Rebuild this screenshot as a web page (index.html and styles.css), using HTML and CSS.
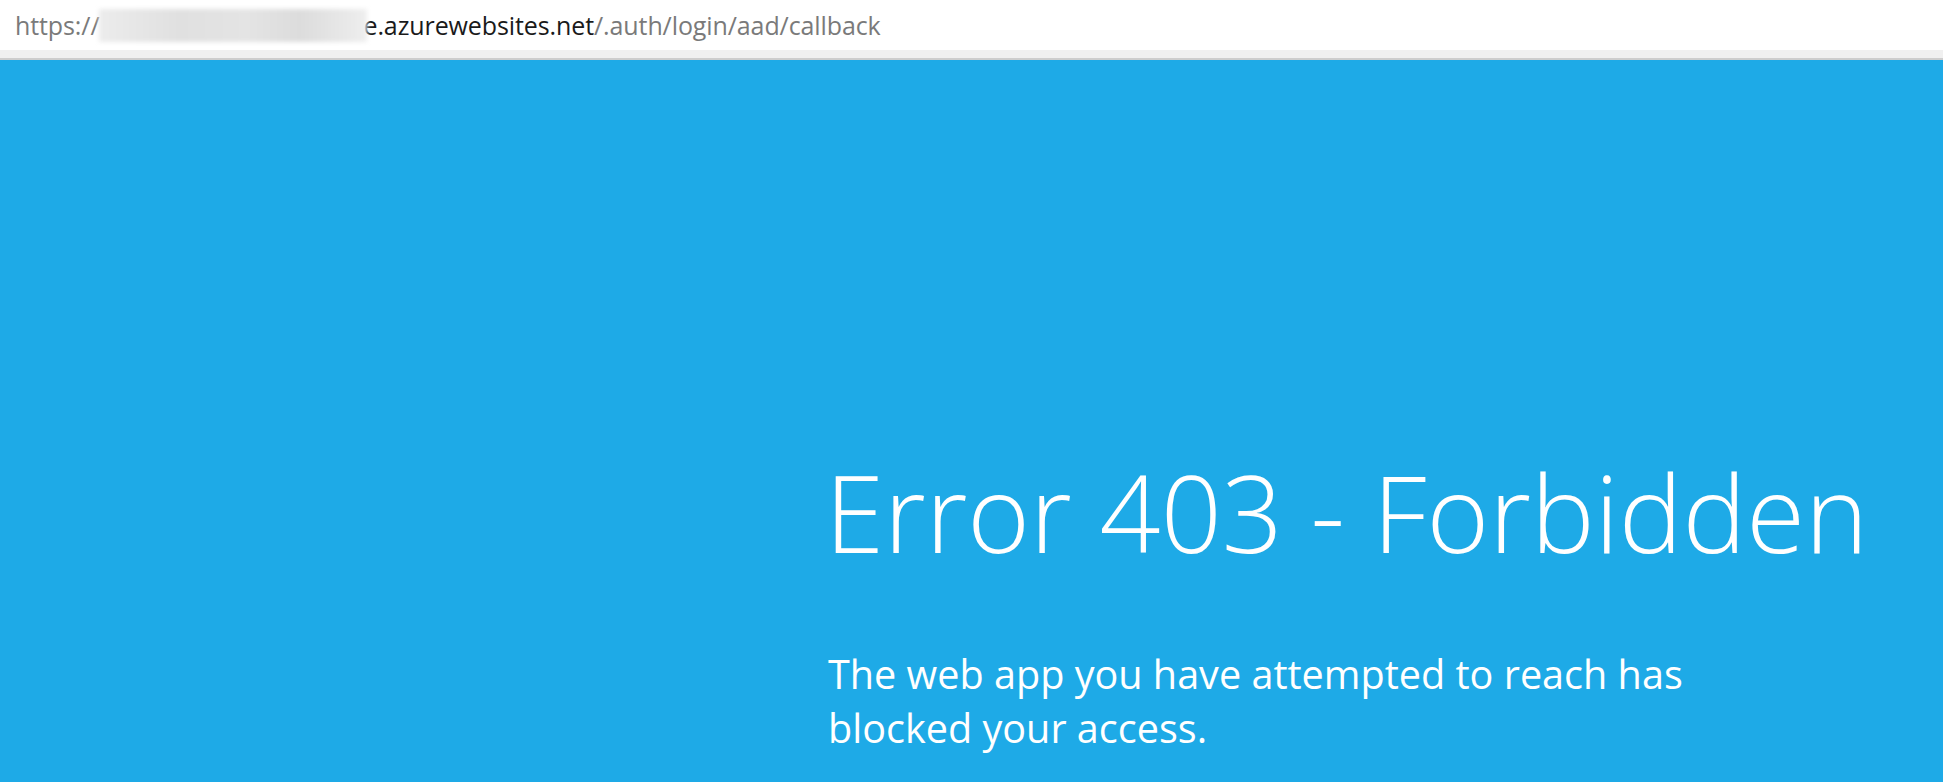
FILE: index.html
```html
<!DOCTYPE html>
<html lang="en">
<head>
<meta charset="utf-8">
<title>Error 403 - Forbidden</title>
<link rel="stylesheet" href="styles.css">
</head>
<body>
<div class="window">
  <div class="addressbar">
    <span class="url-dim">https://</span><span class="url-blur"></span><span class="url-host">e.azurewebsites.net</span><span class="url-dim">/.auth/login/aad/callback</span>
  </div>
  <div class="strip"></div>
  <main class="page">
    <div class="content">
      <h1 class="title">Error 403 - Forbidden</h1>
      <p class="message">The web app you have attempted to reach has blocked your access.</p>
    </div>
  </main>
</div>
</body>
</html>
```

FILE: styles.css
```css
html, body {
  margin: 0;
  padding: 0;
  height: 100%;
}

body {
  font-family: "Open Sans", "Noto Sans", "Liberation Sans", sans-serif;
  background: #ffffff;
  overflow: hidden;
}

.window {
  display: flex;
  flex-direction: column;
  height: 100vh;
}

.addressbar {
  height: 50px;
  display: flex;
  align-items: center;
  padding-left: 15px;
  font-size: 25px;
  letter-spacing: -0.1px;
  background: #ffffff;
  white-space: nowrap;
}

.url-dim {
  color: #7a7a7a;
}

.url-host {
  color: #1a1a1a;
}

.url-blur {
  display: inline-block;
  width: 268px;
  height: 33px;
  margin-right: -4px;
  background: linear-gradient(90deg, #ececec 0%, #e0e0e0 30%, #e4e4e4 55%, #dcdcdc 75%, #eeeeee 100%);
  filter: blur(2px);
}

.strip {
  height: 8px;
  background: #f0f0f0;
  border-bottom: 2px solid #cdcdcd;
}

.page {
  flex: 1;
  background: #1eaae7;
  color: #ffffff;
  padding-left: 825px;
}

.content {
  width: 880px;
  padding-top: 398px;
}

.title {
  margin: 0;
  font-weight: 300;
  font-size: 107px;
  line-height: 1;
  white-space: nowrap;
}

.message {
  margin: 82px 0 0;
  padding-left: 3px;
  font-size: 39.6px;
  line-height: 54px;
  font-weight: 400;
}
```
